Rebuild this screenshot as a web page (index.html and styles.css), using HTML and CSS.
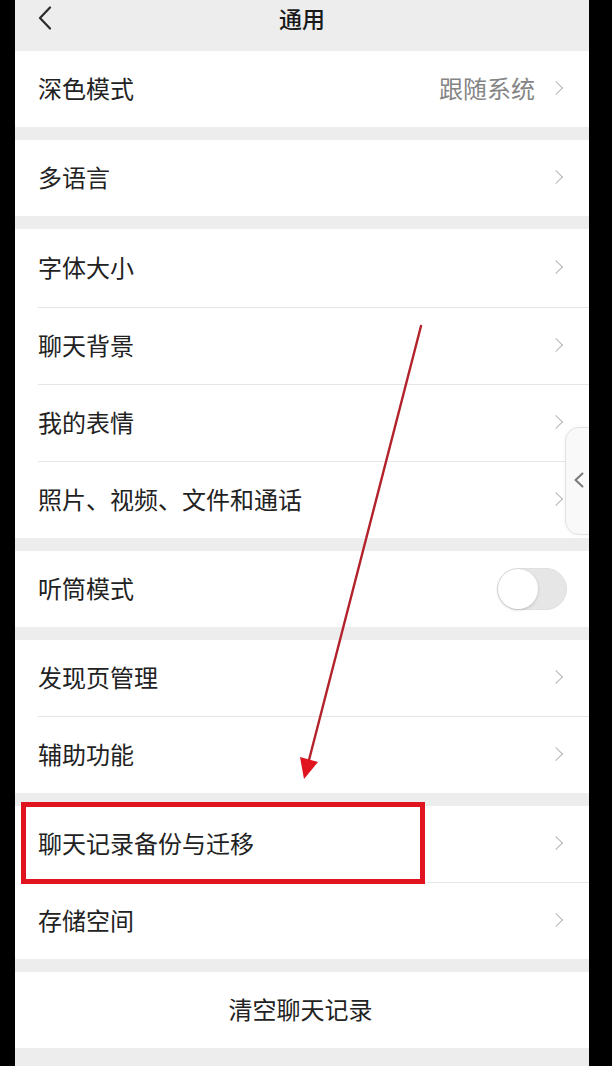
FILE: index.html
```html
<!DOCTYPE html>
<html lang="zh-CN">
<head>
<meta charset="utf-8">
<title>通用</title>
<link rel="stylesheet" href="styles.css">
</head>
<body>
<div class="screen">
  <header class="topbar">
    <svg class="back" width="16" height="24" viewBox="0 0 16 24"><polyline points="13,1.5 3,12 13,22.5" fill="none" stroke="#2b2b2b" stroke-width="2.2" stroke-linecap="round" stroke-linejoin="round"/></svg>
    <h1 class="title">通用</h1>
  </header>

  <section class="group">
    <div class="row"><span class="label">深色模式</span><span class="value">跟随系统</span><i class="chev"></i></div>
  </section>

  <section class="group">
    <div class="row"><span class="label">多语言</span><i class="chev"></i></div>
  </section>

  <section class="group tall">
    <div class="row"><span class="label">字体大小</span><i class="chev"></i></div>
    <div class="row"><span class="label">聊天背景</span><i class="chev"></i></div>
    <div class="row"><span class="label">我的表情</span><i class="chev"></i></div>
    <div class="row"><span class="label">照片、视频、文件和通话</span><i class="chev"></i></div>
  </section>

  <section class="group">
    <div class="row"><span class="label">听筒模式</span><span class="switch"><span class="knob"></span></span></div>
  </section>

  <section class="group">
    <div class="row"><span class="label">发现页管理</span><i class="chev"></i></div>
    <div class="row"><span class="label">辅助功能</span><i class="chev"></i></div>
  </section>

  <section class="group">
    <div class="row"><span class="label">聊天记录备份与迁移</span><i class="chev"></i></div>
    <div class="row"><span class="label">存储空间</span><i class="chev"></i></div>
  </section>

  <section class="group">
    <div class="row center"><span class="label">清空聊天记录</span></div>
  </section>

  <div class="sidetab"><svg width="12" height="16" viewBox="0 0 12 16"><polyline points="9.5,1.5 2.5,8 9.5,14.5" fill="none" stroke="#7a7a7a" stroke-width="2" stroke-linecap="round" stroke-linejoin="round"/></svg></div>
</div>

<div class="highlight"></div>
<svg class="arrow" width="612" height="1066" viewBox="0 0 612 1066">
  <line x1="421" y1="326" x2="309" y2="760" stroke="#b3222a" stroke-width="2.4" stroke-linecap="round"/>
  <polygon points="304,779 318,762 300,757" fill="#e0141e"/>
</svg>
</body>
</html>
```

FILE: styles.css
```css
html, body {
  margin: 0;
  padding: 0;
  background: #000;
}
body {
  position: relative;
  width: 612px;
  height: 1066px;
  overflow: hidden;
  font-family: "Noto Sans CJK SC", "Noto Sans", sans-serif;
}
.screen {
  position: relative;
  margin-left: 15px;
  width: 574px;
  height: 1066px;
  background: #ededed;
  overflow: hidden;
  display: flex;
  flex-direction: column;
  gap: 13px;
}
.topbar {
  position: relative;
  height: 51px;
  margin-bottom: -13px;
  display: flex;
  align-items: center;
  justify-content: center;
}
.back {
  position: absolute;
  left: 22px;
  top: 6px;
}
.title {
  margin: 0;
  margin-top: -15px;
  font-size: 23px;
  font-weight: 500;
  color: #1a1a1a;
  line-height: 1;
}
.group {
  background: #fff;
  display: flex;
  flex-direction: column;
}
.row {
  box-sizing: border-box;
  height: 76px;
  display: flex;
  align-items: center;
  padding: 0 24px 3px 23px;
  position: relative;
}
.row + .row {
  height: 77px;
  border-top: 1px solid #e6e6e6;
  margin-left: 23px;
  padding-left: 0;
}
.tall .row:first-child { height: 78px; }
.label {
  font-size: 24px;
  color: #222;
  line-height: 1;
  flex: 1;
}
.value {
  font-size: 24px;
  color: #858585;
  line-height: 1;
  margin-right: 16px;
}
.chev {
  width: 9px;
  height: 9px;
  border-top: 1.6px solid #b5b5b5;
  border-right: 1.6px solid #b5b5b5;
  transform: rotate(45deg);
  margin-right: 4px;
}
.center .label {
  text-align: center;
  padding-right: 2px;
}
.switch {
  width: 70px;
  height: 42px;
  border-radius: 21px;
  background: #e6e6e6;
  box-sizing: border-box;
  border: 1px solid #e0e0e0;
  position: relative;
  margin-right: -2px;
  margin-bottom: -3px;
}
.knob {
  position: absolute;
  left: 0;
  top: 0;
  width: 40px;
  height: 40px;
  border-radius: 50%;
  background: #fff;
  box-shadow: 0 1px 3px rgba(0,0,0,0.18);
}
.sidetab {
  position: absolute;
  left: 550px;
  top: 427px;
  width: 40px;
  height: 108px;
  box-sizing: border-box;
  border: 1px solid #e2e2e2;
  border-radius: 14px;
  background: #f9f9f9;
  box-shadow: 0 0 4px rgba(0,0,0,0.05);
  display: flex;
  align-items: center;
  padding-left: 7px;
}
.sidetab svg {
  margin-top: -2px;
}
.highlight {
  position: absolute;
  left: 21px;
  top: 802px;
  width: 404px;
  height: 82px;
  box-sizing: border-box;
  border: 5px solid #e0141e;
}
.arrow {
  position: absolute;
  left: 0;
  top: 0;
  pointer-events: none;
}
```
